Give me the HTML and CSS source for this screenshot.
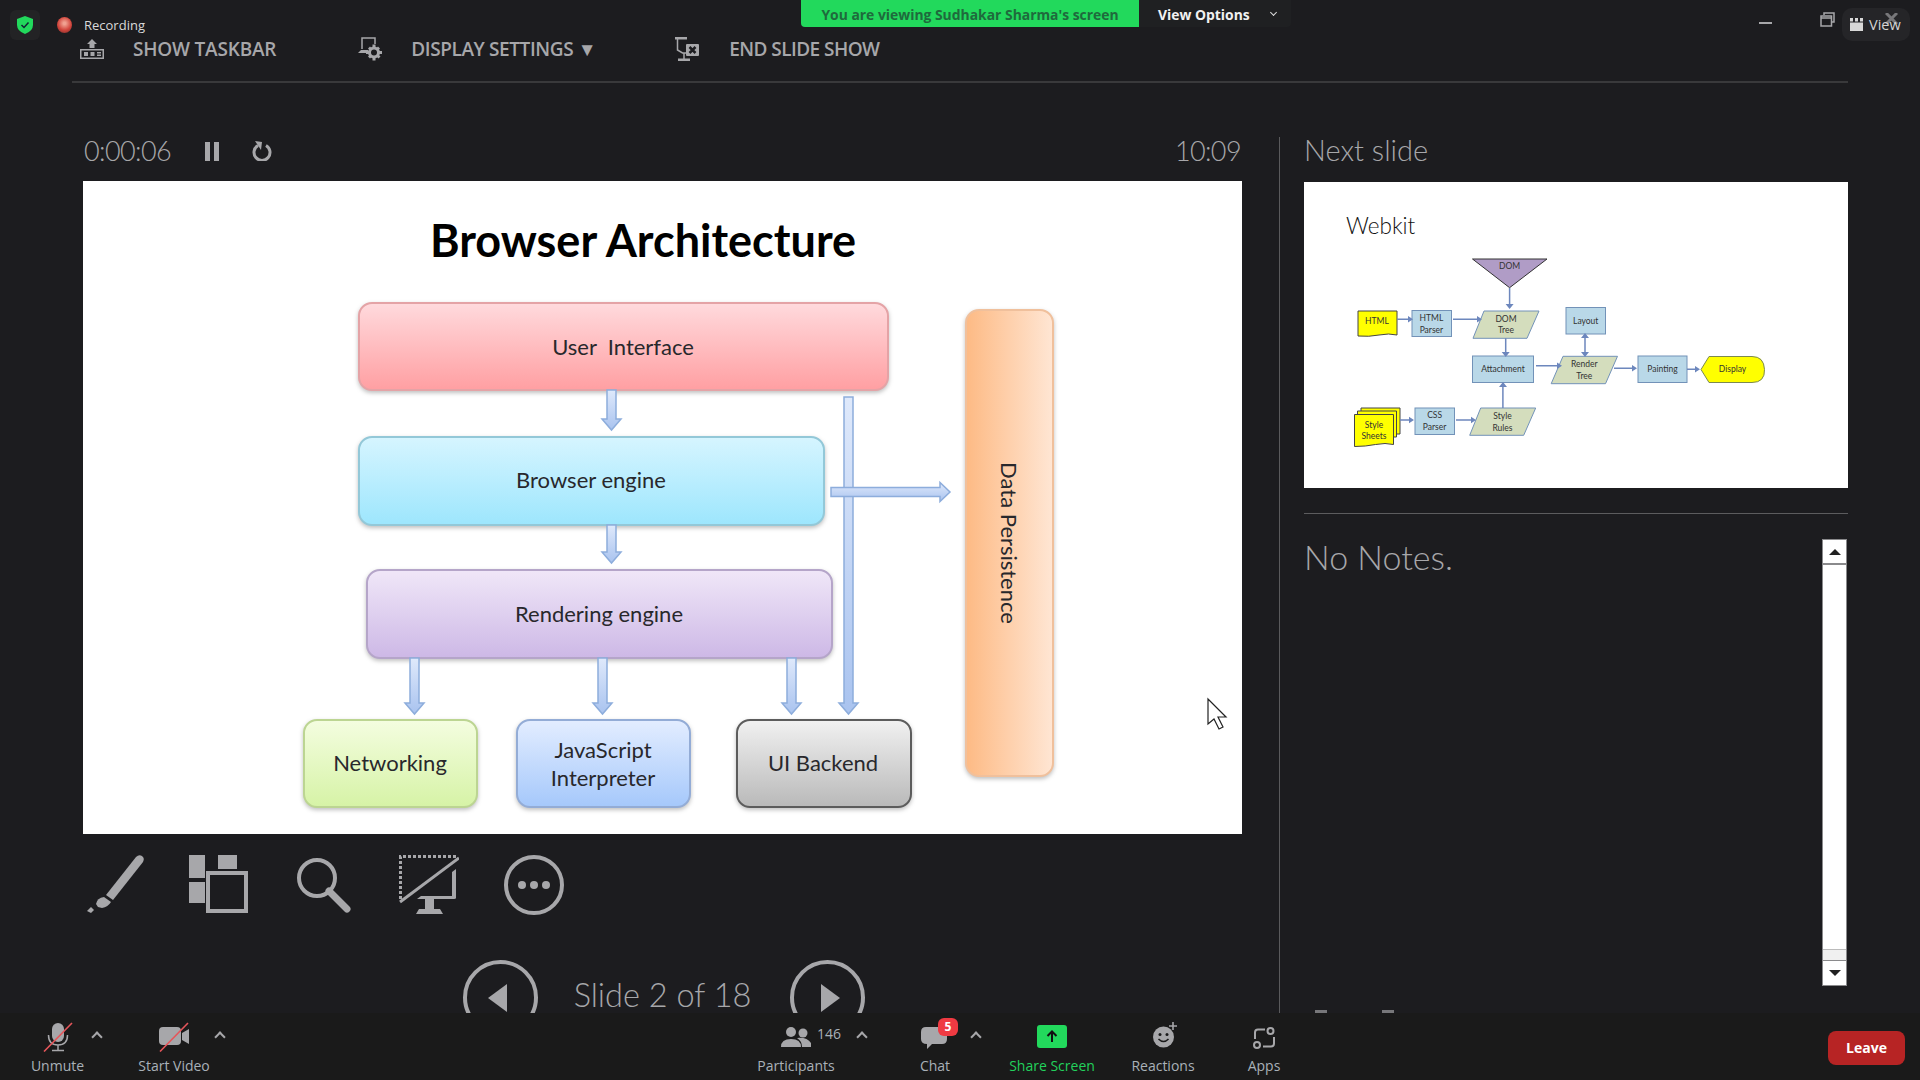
FILE: index.html
```html
<!DOCTYPE html>
<html lang="en">
<head>
  <meta charset="UTF-8">
  <title>Presenter View</title>
  <link rel="stylesheet" href="styles.css">
</head>
<body>

<div class="page">
  <div class="show">

    <div class="taskbar">
      <div class="task-item task-first">
        <svg class="task-icon" width="24" height="20" viewBox="0 0 24 20">
          <path class="ic-fill" d="M9.500 9V5H7l5-5 5 5h-2.500v4z"/>
          <rect class="ic-line" x="0.750" y="10.750" width="22.500" height="8.500"/>
          <rect class="ic-fill" x="4" y="13" width="4" height="4"/>
          <rect class="ic-fill" x="10.500" y="13" width="4" height="4"/>
          <path class="ic-fill" d="M17 13h4v1.500h-4zM17 15.500h4V17h-4z"/>
        </svg>
        <span>SHOW TASKBAR</span>
      </div>
      <div class="task-item task-second">
        <svg class="task-icon" width="25" height="24" viewBox="0 0 25 24">
          <path class="ic-line" d="M4 12V1h13v6"/>
          <path class="ic-fill" d="M0 16l3-3h7v3z"/>
          <circle class="ic-gear" cx="16" cy="15.500" r="4.500"/>
          <path class="ic-fill" d="M14.500 7.500h3V11h-3zM14.500 20h3v3.500h-3zM8 14h3.500v3H8zM20.500 14H24v3h-3.500zM10 11.500l2-2 2.500 2.500-2 2zM18 19l2-2 2.500 2.500-2 2zM20 9.500l2 2-2.500 2.500-2-2zM12.500 17l2 2-2.500 2.500-2-2z"/>
        </svg>
        <span>DISPLAY SETTINGS &#9660;</span>
      </div>
      <div class="task-item task-third">
        <svg class="task-icon" width="24" height="24" viewBox="0 0 24 24">
          <path class="ic-fill" d="M0 0h12v2.500H0z"/>
          <path class="ic-line" d="M2.500 2v11l5 3h4M9 16v6"/>
          <path class="ic-fill" d="M3 21.500h12V24H3z"/>
          <rect class="ic-fill" x="11" y="7" width="13" height="12" rx="1"/>
          <path class="ic-x" d="M14.500 10l6 6M20.500 10l-6 6"/>
        </svg>
        <span>END SLIDE SHOW</span>
      </div>
    </div>

    <div class="columns">
      <div class="left-col">
        <div class="timer-row">
          <span class="big-text timer">0:00:06</span>
          <svg class="pause-icon" width="14" height="19" viewBox="0 0 14 19">
            <rect class="ic-fill" width="5" height="19"/>
            <rect class="ic-fill" x="9" width="5" height="19"/>
          </svg>
          <svg class="reset-icon" width="20" height="20" viewBox="0 0 20 20">
            <path class="ic-thick" d="M6 4.500a8 8 0 1 0 8 0"/>
            <path class="ic-fill" d="M3 0l7 1-1 8z"/>
          </svg>
          <span class="big-text clock">10:09</span>
        </div>

        <div class="slide">
          <svg width="1159" height="653" viewBox="0 0 1159 653">
            <defs>
              <linearGradient id="gRed" x1="0" y1="0" x2="0" y2="1"><stop offset="0" stop-color="#ffdadd"/><stop offset="1" stop-color="#ff9fa2"/></linearGradient>
              <linearGradient id="gBlue" x1="0" y1="0" x2="0" y2="1"><stop offset="0" stop-color="#d6f5ff"/><stop offset="1" stop-color="#9de6fd"/></linearGradient>
              <linearGradient id="gPurple" x1="0" y1="0" x2="0" y2="1"><stop offset="0" stop-color="#f0e7f8"/><stop offset="1" stop-color="#cdb8e6"/></linearGradient>
              <linearGradient id="gGreen" x1="0" y1="0" x2="0" y2="1"><stop offset="0" stop-color="#f4fde0"/><stop offset="1" stop-color="#d6f3a6"/></linearGradient>
              <linearGradient id="gPeri" x1="0" y1="0" x2="0" y2="1"><stop offset="0" stop-color="#e3edff"/><stop offset="1" stop-color="#a5c8fb"/></linearGradient>
              <linearGradient id="gGrey" x1="0" y1="0" x2="0" y2="1"><stop offset="0" stop-color="#f1f1f1"/><stop offset="1" stop-color="#b9b9b9"/></linearGradient>
              <linearGradient id="gOrange" x1="0" y1="0" x2="1" y2="0"><stop offset="0" stop-color="#fdba84"/><stop offset="1" stop-color="#ffe6d4"/></linearGradient>
              <linearGradient id="gArrow" x1="0" y1="0" x2="0" y2="1"><stop offset="0" stop-color="#dfe9fb"/><stop offset="1" stop-color="#a9c3ef"/></linearGradient>
            </defs>

            <text class="slide-title" x="560" y="76">Browser Architecture</text>

            <rect class="box box-red" x="276" y="122" width="529" height="87" rx="13"/>
            <rect class="box box-blue" x="276" y="256" width="465" height="88" rx="13"/>
            <rect class="box box-purple" x="284" y="389" width="465" height="88" rx="13"/>
            <rect class="box box-green" x="221" y="539" width="173" height="87" rx="13"/>
            <rect class="box box-peri" x="434" y="539" width="173" height="87" rx="13"/>
            <rect class="box box-grey" x="654" y="539" width="174" height="87" rx="13"/>
            <rect class="box box-orange" x="883" y="129" width="87" height="466" rx="13"/>

            <path class="arrow" d="M524 209h9v29h5l-9.500 11-9.500-11h5z"/>
            <path class="arrow" d="M524 344h9v27h5l-9.500 11-9.500-11h5z"/>
            <path class="arrow" d="M327 477h9v45h5l-9.500 11-9.500-11h5z"/>
            <path class="arrow" d="M515 477h9v45h5l-9.500 11-9.500-11h5z"/>
            <path class="arrow" d="M704 477h9v45h5l-9.500 11-9.500-11h5z"/>
            <path class="arrow" d="M761 216h9v306h5l-9.500 11-9.500-11h5z"/>
            <path class="arrow" d="M748 306.500h109v-5l10 9.500-10 9.500v-5H748z"/>

            <text class="box-label" x="540" y="174">User&#160; Interface</text>
            <text class="box-label" x="508" y="307">Browser engine</text>
            <text class="box-label" x="516" y="441">Rendering engine</text>
            <text class="box-label" x="307" y="590">Networking</text>
            <text class="box-label" x="520" y="577">JavaScript</text>
            <text class="box-label" x="520" y="605">Interpreter</text>
            <text class="box-label" x="740" y="590">UI Backend</text>
            <text class="box-label" transform="translate(918 362) rotate(90)">Data Persistence</text>

            <path class="cursor" d="M1125 518v25l6-5 5 10 4-2-5-10h8z"/>
          </svg>
        </div>

        <div class="tools">
          <svg class="tool tool-pen" width="58" height="58" viewBox="0 0 58 58">
            <path class="ic-fill" d="M50 2q3-3 6-1 3 2 1 6L27 45l-7-5z"/>
            <path class="ic-fill" d="M18 42l7 5q-3 5-9 6l-4-1-2-3q1-6 8-7z"/>
            <path class="ic-fill" d="M5 52l3 3-3 3-4-2z"/>
          </svg>
          <svg class="tool tool-grid" width="59" height="58" viewBox="0 0 59 58">
            <rect class="ic-fill" width="16" height="23"/>
            <rect class="ic-fill" x="29" width="19" height="14"/>
            <rect class="ic-fill" y="27" width="16" height="21"/>
            <rect class="ic-wide" x="19" y="18" width="38" height="38"/>
          </svg>
          <svg class="tool tool-search" width="56" height="56" viewBox="0 0 56 56">
            <circle class="ic-wide" cx="21" cy="21" r="18"/>
            <path class="ic-handle" d="M33 34l18 18"/>
          </svg>
          <svg class="tool tool-monitor" width="60" height="60" viewBox="0 0 60 60">
            <path class="ic-dash" d="M1.500 44V1.500H59"/>
            <path class="ic-slash" d="M1 47L60 3"/>
            <path class="ic-fill" d="M57 14v29q0 1-2 1H18l4-3h31V17z"/>
            <path class="ic-fill" d="M26 44h9v10h-9zM20 54h21l3 5H17z"/>
          </svg>
          <svg class="tool" width="60" height="60" viewBox="0 0 60 60">
            <circle class="ic-wide" cx="30" cy="30" r="28"/>
            <circle class="ic-fill" cx="18" cy="30" r="4"/>
            <circle class="ic-fill" cx="30" cy="30" r="4"/>
            <circle class="ic-fill" cx="42" cy="30" r="4"/>
          </svg>
        </div>

        <div class="slide-nav">
          <div class="nav-circle"><span class="tri-left"></span></div>
          <span class="slide-count">Slide 2 of 18</span>
          <div class="nav-circle"><span class="tri-right"></span></div>
        </div>
      </div>

      <div class="right-col">
        <div class="next-head big-text">Next slide</div>
        <div class="next-slide">
          <svg width="545" height="306" viewBox="0 0 545 306">
            <text class="webkit-title" x="42" y="52">Webkit</text>

            <path class="fc fc-dom" d="M168.500 77H243l-37.400 28.700z"/>
            <path class="fc fc-note" d="M54 129h39v24q-8-2-18 0t-21 1z"/>
            <rect class="fc fc-step" x="108" y="128.500" width="39.500" height="26"/>
            <path class="fc fc-tree" d="M180 129h55l-12 27.300h-54z"/>
            <rect class="fc fc-step" x="262" y="125.500" width="39.500" height="26.500"/>
            <rect class="fc fc-step" x="168.500" y="174" width="61" height="26.500"/>
            <path class="fc fc-tree" d="M259 174.300h54.500l-12 27.400h-54.300z"/>
            <rect class="fc fc-step" x="334" y="174" width="49" height="26.500"/>
            <path class="fc fc-display" d="M405 174.500h43q12 0 12.500 13t-12.500 13h-43l-8-13z"/>
            <path class="fc fc-note" d="M57 226h39v26h-39z"/>
            <path class="fc fc-note" d="M53.500 229h39v26h-39z"/>
            <path class="fc fc-note" d="M50.500 232.500h39v30q-8-2-18 0t-21 2z"/>
            <rect class="fc fc-step" x="111" y="226" width="39.500" height="26.500"/>
            <path class="fc fc-tree" d="M176.700 226h55l-12 27.300h-54z"/>

            <path class="fc-arrow" d="M205.600 106v16M93 137.300h11M149 137.300h24M201.700 156.300v14M232 183.700h21M281 156v14M310 186.300h18M383 187.300h8M96 238h9M152 238h15M198.900 226v-22"/>
            <path class="fc-head" d="M201.600 122h8l-4 5zM104 134l5 3.300-5 3.300zM173 134l5 3.300-5 3.300zM197.700 170h8l-4 5zM253 180.400l5 3.300-5 3.300zM277 156l4-5 4 5zM277 170h8l-4 5zM328 183l5 3.300-5 3.300zM391 184l5 3.300-5 3.300zM105 234.700l5 3.300-5 3.300zM167 234.700l5 3.300-5 3.300zM195 205l4-5 4 5z"/>

            <g class="fc-text">
              <text x="205.600" y="87">DOM</text>
              <text x="73" y="142">HTML</text>
              <text x="127.400" y="139">HTML</text>
              <text x="127.400" y="151">Parser</text>
              <text x="202" y="139.500">DOM</text>
              <text x="202" y="151">Tree</text>
              <text x="281.700" y="142">Layout</text>
              <text x="199" y="190">Attachment</text>
              <text x="280.300" y="185">Render</text>
              <text x="280.300" y="197">Tree</text>
              <text x="358.500" y="190">Painting</text>
              <text x="428.500" y="190">Display</text>
              <text x="70" y="246">Style</text>
              <text x="70" y="257">Sheets</text>
              <text x="130.600" y="236">CSS</text>
              <text x="130.600" y="248">Parser</text>
              <text x="198.500" y="237">Style</text>
              <text x="198.500" y="248.500">Rules</text>
            </g>
          </svg>
        </div>
        <div class="next-line"></div>
        <div class="notes">
          <div class="notes-text">No Notes.</div>
          <div class="notes-scroll">
            <div class="scroll-btn scroll-up"><span></span></div>
            <div class="scroll-track"></div>
            <div class="scroll-thumb"></div>
            <div class="scroll-btn scroll-down"><span></span></div>
          </div>
        </div>
        <div class="notes-cut"><span></span><span></span></div>
      </div>
    </div>
  </div>

  <div class="meeting-bar">
    <div class="tb-item tb-unmute">
      <svg width="30" height="30" viewBox="0 0 30 30">
        <rect class="ic-fill" x="9" y="1" width="12" height="19" rx="6"/>
        <path class="ic-line" d="M5.500 13q0 10 9.500 10t9.500-10M15 23v5M9 28.500h12"/>
        <path class="strike" d="M1 29.500L29 1"/>
      </svg>
      <span class="caret"></span>
      <span class="tb-label">Unmute</span>
    </div>
    <div class="tb-item tb-video">
      <svg width="30" height="30" viewBox="0 0 30 30">
        <rect class="ic-fill" y="5" width="22" height="18" rx="4"/>
        <path class="ic-fill" d="M23 11l7-4v15l-7-4z"/>
        <path class="strike" d="M1 29.500L29 1"/>
      </svg>
      <span class="caret"></span>
      <span class="tb-label">Start Video</span>
    </div>
    <div class="tb-item tb-people">
      <div class="tb-people-top">
        <svg width="30" height="20" viewBox="0 0 30 20">
          <circle class="ic-fill" cx="10" cy="5" r="5"/>
          <circle class="ic-fill" cx="22" cy="6" r="4.500"/>
          <path class="ic-fill" d="M0 20q0-8 10-8t10 8zM16 11q10-1 14 5v4h-9q0-6-5-9z"/>
        </svg>
        <span class="people-count">146</span>
      </div>
      <span class="caret"></span>
      <span class="tb-label">Participants</span>
    </div>
    <div class="tb-item tb-chat">
      <svg width="28" height="24" viewBox="0 0 28 24">
        <path class="ic-fill" d="M5 2h16q5 0 5 5v7q0 5-5 5H11l-5 5v-5q-6 0-6-5V7q0-5 5-5z"/>
      </svg>
      <span class="chat-badge">5</span>
      <span class="caret"></span>
      <span class="tb-label">Chat</span>
    </div>
    <div class="tb-item tb-share">
      <svg width="30" height="23" viewBox="0 0 30 23">
        <rect class="share-box" width="30" height="23" rx="3"/>
        <path class="share-arrow" d="M15 17V7M10.500 11l4.500-4.500 4.500 4.500"/>
      </svg>
      <span class="tb-label share-label">Share Screen</span>
    </div>
    <div class="tb-item tb-react">
      <svg width="24" height="26" viewBox="0 0 24 26">
        <circle class="ic-fill" cx="10.500" cy="15" r="10.500"/>
        <circle class="ic-dark" cx="7" cy="12.500" r="1.500"/>
        <circle class="ic-dark" cx="14" cy="12.500" r="1.500"/>
        <path class="smile" d="M5.500 17q5 5 10 0"/>
        <path class="react-plus" d="M20 0v8M16 4h8"/>
      </svg>
      <span class="tb-label">Reactions</span>
    </div>
    <div class="tb-item tb-apps">
      <svg width="22" height="22" viewBox="0 0 22 22">
        <path class="ic-line2" d="M12 2.500H5q-3 0-3 3V12M10 19.500h8q3 0 3-3V10"/>
        <circle class="ic-line2" cx="17.500" cy="4" r="3"/>
        <circle class="ic-line2" cx="4" cy="18" r="3"/>
      </svg>
      <span class="tb-label">Apps</span>
    </div>
    <div class="leave-btn">Leave</div>
  </div>

  <div class="shield-tile">
    <svg width="16" height="18" viewBox="0 0 16 18">
      <path class="shield" d="M8 0l8 3v6q0 6-8 9-8-3-8-9V3z"/>
      <path class="shield-tick" d="M4.500 9l2.500 2.500 4.500-5"/>
    </svg>
  </div>
  <div class="rec-status"><span class="rec-dot"></span>Recording</div>

  <div class="view-banner">
    <div class="banner-green">You are viewing Sudhakar Sharma's screen</div>
    <div class="banner-options">View Options <span class="banner-chev"></span></div>
  </div>

  <div class="win-min"></div>
  <svg class="win-restore" width="15" height="15" viewBox="0 0 15 15">
    <path d="M4 3V1h10v9h-2"/>
    <rect x="1" y="4" width="10.500" height="10"/>
    <path d="M1 6h10.500"/>
  </svg>
  <div class="view-tile">
    <svg width="13" height="13" viewBox="0 0 13 13">
      <rect class="view-ic" width="3" height="3.500"/>
      <rect class="view-ic" x="5" width="3" height="3.500"/>
      <rect class="view-ic" x="10" width="3" height="3.500"/>
      <rect class="view-ic" y="4.500" width="13" height="8.500"/>
    </svg>
    <svg class="view-x" width="13" height="11" viewBox="0 0 13 11"><path d="M1 0l11 11M12 0L1 11"/></svg>
    <span>View</span>
  </div>
</div>

</body>
</html>
```

FILE: styles.css
```css
body {
  margin: 0;
  background-color: #1c1c1f;
  font-family: "Open Sans", "Liberation Sans", sans-serif;
  color: #a7a7aa;
}

.page {
  position: relative;
  width: 1920px;
  height: 1080px;
  overflow: hidden;
  display: flex;
  flex-direction: column;
}

.show {
  height: 1013px;
  overflow: hidden;
  padding: 0 72px;
  box-sizing: border-box;
}

/* icon fills */
.ic-fill { fill: #a7a7aa; }
.ic-dark { fill: #1a1a1a; }
.ic-line { fill: none; stroke: #a7a7aa; stroke-width: 1.5; }
.ic-line2 { fill: none; stroke: #a7a7aa; stroke-width: 2; }
.ic-thick { fill: none; stroke: #a7a7aa; stroke-width: 3; }
.ic-wide { fill: none; stroke: #a7a7aa; stroke-width: 4; }
.ic-gear { fill: none; stroke: #a7a7aa; stroke-width: 3; }
.ic-x { fill: none; stroke: #1c1c1f; stroke-width: 2.5; }
.ic-handle { fill: none; stroke: #a7a7aa; stroke-width: 7; stroke-linecap: round; }
.ic-dash { fill: none; stroke: #a7a7aa; stroke-width: 3; stroke-dasharray: 3 2; }
.ic-slash { fill: none; stroke: #a7a7aa; stroke-width: 3; }

/* taskbar row */
.taskbar {
  height: 83px;
  padding-top: 37px;
  box-sizing: border-box;
  border-bottom: 2px solid #39393b;
  display: flex;
  align-items: flex-start;
}

.task-item {
  display: flex;
  align-items: center;
  height: 24px;
  font-size: 19px;
  font-weight: 600;
  letter-spacing: -0.2px;
  white-space: nowrap;
}

.task-first { margin-left: 8px; }
.task-first .task-icon { margin-right: 29px; }
.task-second { margin-left: 82px; letter-spacing: -0.4px; }
.task-second .task-icon { margin-right: 28px; }
.task-third { margin-left: 79px; letter-spacing: -0.55px; }
.task-third .task-icon { margin-right: 30px; }

/* columns */
.columns {
  display: flex;
  margin-top: 54px;
  height: 876px;
}

.left-col {
  width: 1159px;
  margin-left: 11px;
  padding-right: 37px;
  border-right: 1px solid #5a5a5c;
  flex-shrink: 0;
}

.right-col {
  width: 544px;
  margin-left: 24px;
}

.big-text {
  font-family: Lato, "Open Sans", sans-serif;
  font-size: 29px;
  font-weight: 300;
  line-height: 28px;
}

.timer-row {
  display: flex;
  align-items: center;
  height: 28px;
  margin-bottom: 16px;
}

.timer {
  margin-left: 1px;
  font-size: 27px;
  letter-spacing: -0.6px;
}

.pause-icon { margin-left: 34px; }
.reset-icon { margin-left: 33px; }

.clock {
  margin-left: auto;
  margin-right: 1px;
  font-size: 27px;
  letter-spacing: -0.6px;
}

.slide {
  width: 1159px;
  height: 653px;
  background-color: #fff;
}

.slide svg, .next-slide svg { display: block; }

.slide-title {
  font-family: Lato, sans-serif;
  font-size: 45px;
  font-weight: 700;
  text-anchor: middle;
  fill: #000;
}

.box {
  stroke-width: 2;
  filter: drop-shadow(0 2px 2px rgba(0, 0, 0, 0.25));
}

.box-red { fill: url(#gRed); stroke: #e4a3a6; }
.box-blue { fill: url(#gBlue); stroke: #93c8d8; }
.box-purple { fill: url(#gPurple); stroke: #b5a5c9; }
.box-green { fill: url(#gGreen); stroke: #bcd592; }
.box-peri { fill: url(#gPeri); stroke: #93acd6; }
.box-grey { fill: url(#gGrey); stroke: #5c5c5c; }
.box-orange { fill: url(#gOrange); stroke: #f0c09c; }

.arrow {
  fill: url(#gArrow);
  stroke: #8daddc;
  stroke-width: 1.5;
}

.box-label {
  font-family: Lato, sans-serif;
  font-size: 22px;
  text-anchor: middle;
  fill: #28282c;
}

.cursor {
  fill: #fff;
  stroke: #222;
  stroke-width: 1.2;
}

/* tools under the slide */
.tools {
  display: flex;
  margin-top: 21px;
  height: 60px;
}

.tool { display: block; }
.tool-pen { margin-left: 3px; }
.tool-grid { margin-left: 45px; }
.tool-search { margin-left: 48px; margin-top: 2px; }
.tool-monitor { margin-left: 47px; }
.tools .tool:last-child { margin-left: 45px; }

.slide-nav {
  display: flex;
  justify-content: center;
  align-items: flex-start;
  margin-top: 45px;
  padding-left: 3px;
  gap: 39px;
}

.nav-circle {
  width: 75px;
  height: 75px;
  box-sizing: border-box;
  border: 4px solid #a7a7aa;
  border-radius: 50%;
  display: flex;
  align-items: center;
  justify-content: center;
  flex-shrink: 0;
}

.tri-left {
  margin-right: 6px;
  border-top: 14px solid transparent;
  border-bottom: 14px solid transparent;
  border-right: 19px solid #a7a7aa;
}

.tri-right {
  margin-left: 6px;
  border-top: 14px solid transparent;
  border-bottom: 14px solid transparent;
  border-left: 19px solid #a7a7aa;
}

.slide-count {
  font-family: Lato, "Open Sans", sans-serif;
  font-size: 32.500px;
  font-weight: 300;
  line-height: 34px;
  margin-top: 18px;
  margin-left: -3px;
  white-space: nowrap;
}

/* right column */
.next-head {
  margin-top: -1px;
  margin-bottom: 18px;
}

.next-slide {
  width: 544px;
  height: 306px;
  overflow: hidden;
  background-color: #fff;
}

.webkit-title {
  font-family: Lato, sans-serif;
  font-size: 22.500px;
  font-weight: 300;
  fill: #111;
}

.fc { stroke-width: 1; }
.fc-dom { fill: #b09cc6; stroke: #333; }
.fc-note { fill: #ffff00; stroke: #444; }
.fc-step { fill: #b9d8e8; stroke: #7292b8; }
.fc-tree { fill: #d4ddbd; stroke: #7292b8; }
.fc-display { fill: #ffff00; stroke: #7c8a50; }
.fc-arrow { fill: none; stroke: #6d87bd; stroke-width: 1.5; }
.fc-head { fill: #6d87bd; }

.fc-text text {
  font-family: Lato, sans-serif;
  font-size: 8.500px;
  text-anchor: middle;
  fill: #333;
}

.next-line {
  height: 1px;
  margin-top: 25px;
  background-color: #5c5c5e;
}

.notes {
  display: flex;
  justify-content: space-between;
  margin-top: 25px;
  height: 447px;
}

.notes-text {
  font-family: Lato, "Open Sans", sans-serif;
  font-size: 34px;
  font-weight: 300;
  line-height: 38px;
  margin-top: -1px;
}

.notes-scroll {
  width: 25px;
  margin-right: 1px;
  box-sizing: border-box;
  border: 1px solid #8a8a8c;
  background-color: #fff;
  display: flex;
  flex-direction: column;
}

.scroll-btn {
  height: 25px;
  flex-shrink: 0;
  display: flex;
  align-items: center;
  justify-content: center;
}

.scroll-up { border-bottom: 2px solid #8a8a8c; box-sizing: border-box; }
.scroll-down { border-top: 1px solid #8a8a8c; box-sizing: border-box; }

.scroll-up span {
  border-left: 6px solid transparent;
  border-right: 6px solid transparent;
  border-bottom: 6px solid #222;
}

.scroll-down span {
  border-left: 6px solid transparent;
  border-right: 6px solid transparent;
  border-top: 6px solid #222;
}

.scroll-track { flex: 1; }

.scroll-thumb {
  height: 10px;
  background-color: #f0f0f0;
  border-top: 1px solid #bbb;
}

.notes-cut {
  display: flex;
  margin-top: 24px;
  height: 3px;
  padding-left: 11px;
  gap: 55px;
}

.notes-cut span {
  width: 12px;
  height: 3px;
  background-color: #77777a;
}

/* meeting controls */
.meeting-bar {
  height: 67px;
  background-color: #1a1a1a;
  display: flex;
  align-items: flex-start;
  padding-left: 20px;
  box-sizing: border-box;
}

.tb-item {
  position: relative;
  height: 67px;
  display: flex;
  flex-direction: column;
  align-items: center;
  flex-shrink: 0;
}

.tb-label {
  position: absolute;
  top: 43px;
  left: 0;
  right: 0;
  text-align: center;
  font-size: 14px;
  line-height: 19px;
  color: #a9b1b8;
  white-space: nowrap;
}

.share-label { color: #22d15c; }

.caret {
  position: absolute;
  top: 20px;
  width: 6px;
  height: 6px;
  border-left: 2px solid #a7a7aa;
  border-top: 2px solid #a7a7aa;
  transform: rotate(45deg);
}

.strike { fill: none; stroke: #e5555a; stroke-width: 1.6; }

.tb-item svg { margin-top: 9px; }

.tb-unmute { width: 75px; }
.tb-unmute .caret { left: 73px; }
.tb-video { width: 90px; margin-left: 34px; }
.tb-video .caret { left: 87px; }

.tb-people { width: 100px; margin-left: 527px; }
.tb-people .caret { left: 112px; }
.tb-people-top {
  position: absolute;
  left: 35px;
  display: flex;
}
.tb-people-top svg { margin-top: 14px; }
.people-count {
  margin-left: 6px;
  margin-top: 11px;
  font-size: 14px;
  line-height: 20px;
  color: #a9b1b8;
}

.tb-chat { width: 60px; margin-left: 59px; }
.tb-chat svg { margin-top: 12px; }
.tb-chat .caret { left: 67px; }

.chat-badge {
  position: absolute;
  top: 5px;
  left: 33px;
  width: 20px;
  height: 18px;
  border-radius: 6px;
  background-color: #ef3a42;
  color: #fff;
  font-size: 12px;
  font-weight: 700;
  line-height: 18px;
  text-align: center;
}

.tb-share { width: 100px; margin-left: 37px; }
.tb-share svg { margin-top: 12px; }
.share-box { fill: #22d95c; }
.share-arrow { fill: none; stroke: #111; stroke-width: 2; }

.tb-react { width: 80px; margin-left: 21px; }
.tb-react svg { margin-left: 3px; }
.smile { fill: none; stroke: #1a1a1a; stroke-width: 1.6; }
.react-plus { fill: none; stroke: #a7a7aa; stroke-width: 1.6; }

.tb-apps { width: 50px; margin-left: 36px; }
.tb-apps svg { margin-top: 14px; }

.leave-btn {
  margin-left: auto;
  margin-right: 15px;
  margin-top: 18px;
  width: 77px;
  height: 34px;
  border-radius: 8px;
  background-color: #b72424;
  color: #fff;
  font-size: 14px;
  font-weight: 700;
  line-height: 34px;
  text-align: center;
}

/* things laid over the shared screen */
.shield-tile {
  position: absolute;
  top: 10px;
  left: 10px;
  width: 30px;
  height: 30px;
  border-radius: 6px;
  background-color: #232325;
  display: flex;
  align-items: center;
  justify-content: center;
}

.shield { fill: #22d95c; }
.shield-tick { fill: none; stroke: #123; stroke-width: 1.5; }

.rec-status {
  position: absolute;
  top: 15px;
  left: 57px;
  display: flex;
  align-items: center;
  font-size: 13px;
  line-height: 20px;
  color: #d9d9d9;
}

.rec-dot {
  width: 15px;
  height: 16px;
  margin-right: 12px;
  border-radius: 50%;
  background: radial-gradient(circle at 50% 40%, #f0a090 10%, #d2453c 55%, #6a2a28 100%);
}

.view-banner {
  position: absolute;
  top: 0;
  left: 801px;
  display: flex;
  height: 27px;
  line-height: 29px;
  font-size: 13.900px;
  font-weight: 700;
  white-space: nowrap;
}

.banner-green {
  width: 338px;
  text-align: center;
  background-color: #22d95c;
  color: #1f6a3c;
  border-bottom-left-radius: 4px;
}

.banner-options {
  width: 152px;
  padding-left: 19px;
  box-sizing: border-box;
  background-color: #1f2022;
  color: #f1f1f1;
  border-bottom-right-radius: 4px;
  position: relative;
}

.banner-chev {
  position: absolute;
  top: 10px;
  left: 132px;
  width: 4px;
  height: 4px;
  border-right: 1.500px solid #ddd;
  border-bottom: 1.500px solid #ddd;
  transform: rotate(45deg);
}

.win-min {
  position: absolute;
  top: 22px;
  left: 1759px;
  width: 13px;
  height: 2px;
  background-color: #a7a7aa;
}

.win-restore {
  position: absolute;
  top: 12px;
  left: 1820px;
  fill: none;
  stroke: #a7a7aa;
  stroke-width: 1.500;
}

.view-tile {
  position: absolute;
  top: 8px;
  left: 1842px;
  width: 68px;
  height: 33px;
  border-radius: 10px;
  background-color: #252528;
  display: flex;
  align-items: center;
  padding-left: 8px;
  box-sizing: border-box;
  font-size: 14.500px;
  color: #d4d4d4;
}

.view-tile span { margin-left: 6px; position: relative; }
.view-ic { fill: #d8d8d8; }

.view-x {
  position: absolute;
  top: 5px;
  left: 43px;
  fill: none;
  stroke: #77777a;
  stroke-width: 3;
}
```
